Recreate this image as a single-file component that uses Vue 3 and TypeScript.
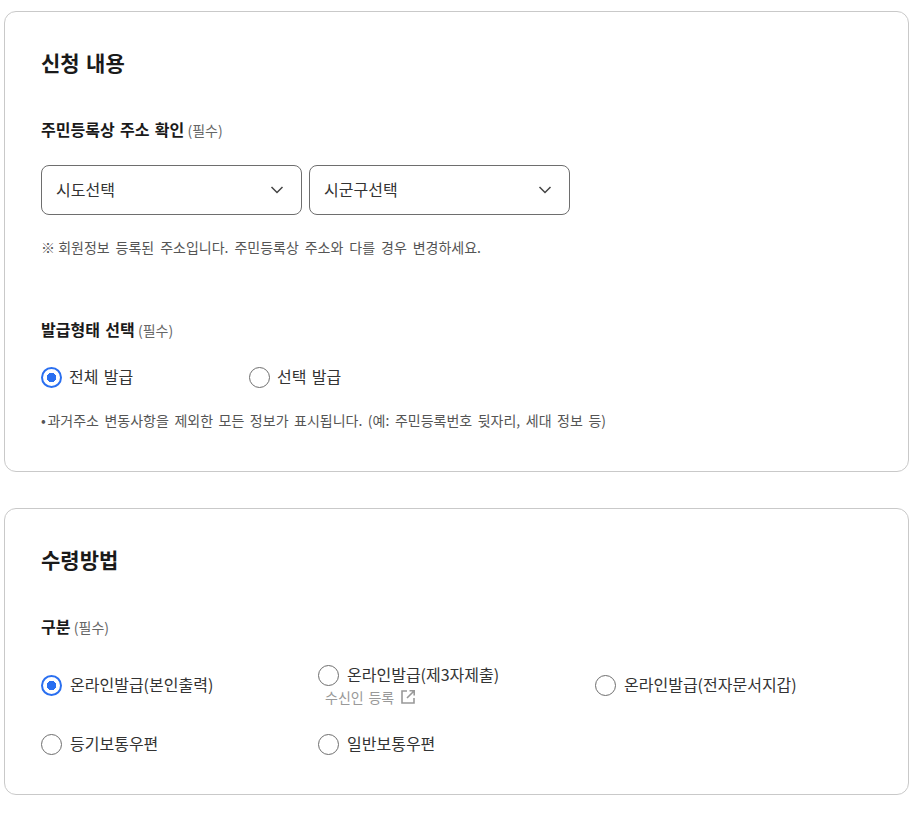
<script setup lang="ts">
import { ref } from 'vue'

const issueType = ref('all')
const receive = ref('self')
</script>

<template>
  <div class="page">
    <section class="card first">
      <h2 class="title">신청 내용</h2>
      <div class="label addr-label">주민등록상 주소 확인 <span class="req">(필수)</span></div>
      <div class="selects">
        <button type="button" class="select">
          <span>시도선택</span>
          <svg width="14" height="8" viewBox="0 0 14 8" fill="none"><path d="M1.5 1l5.5 5.5L12.5 1" stroke="#444" stroke-width="1.5" /></svg>
        </button>
        <button type="button" class="select">
          <span>시군구선택</span>
          <svg width="14" height="8" viewBox="0 0 14 8" fill="none"><path d="M1.5 1l5.5 5.5L12.5 1" stroke="#444" stroke-width="1.5" /></svg>
        </button>
      </div>
      <p class="note addr-note"><span class="mark">※ </span>회원정보 등록된 주소입니다. 주민등록상 주소와 다를 경우 변경하세요.</p>

      <div class="label type-label">발급형태 선택 <span class="req">(필수)</span></div>
      <div class="radios">
        <label class="radio type-radio" @click="issueType = 'all'">
          <i class="dot" :class="{ on: issueType === 'all' }"></i>전체 발급
        </label>
        <label class="radio type-radio" @click="issueType = 'part'">
          <i class="dot" :class="{ on: issueType === 'part' }"></i>선택 발급
        </label>
      </div>
      <p class="note type-note"><span class="mark bullet">• </span>과거주소 변동사항을 제외한 모든 정보가 표시됩니다. (예: 주민등록번호 뒷자리, 세대 정보 등)</p>
    </section>

    <section class="card second">
      <h2 class="title">수령방법</h2>
      <div class="label recv-label">구분 <span class="req">(필수)</span></div>
      <div class="grid">
        <label class="radio" @click="receive = 'self'">
          <i class="dot" :class="{ on: receive === 'self' }"></i>온라인발급(본인출력)
        </label>
        <div class="stack">
          <label class="radio" @click="receive = 'third'">
            <i class="dot" :class="{ on: receive === 'third' }"></i>온라인발급(제3자제출)
          </label>
          <a class="link">
            수신인 등록
            <svg width="16" height="16" viewBox="0 0 16 16" fill="none" stroke="#999" stroke-width="1.6">
              <path d="M7 2H2v12h12V9" />
              <path d="M9.5 1.8h4.7v4.7M14 2L7 9" />
            </svg>
          </a>
        </div>
        <label class="radio" @click="receive = 'wallet'">
          <i class="dot" :class="{ on: receive === 'wallet' }"></i>온라인발급(전자문서지갑)
        </label>
        <label class="radio" @click="receive = 'reg'">
          <i class="dot" :class="{ on: receive === 'reg' }"></i>등기보통우편
        </label>
        <label class="radio" @click="receive = 'normal'">
          <i class="dot" :class="{ on: receive === 'normal' }"></i>일반보통우편
        </label>
      </div>
    </section>
  </div>
</template>

<style>
html,
body {
  background: #fff;
}
</style>

<style scoped>
.page {
  padding: 11px 11px 0 4px;
  font-family: 'Noto Sans CJK KR', 'Noto Sans', sans-serif;
  color: #1a1a1a;
  word-spacing: 1.7px;
  display: flex;
  flex-direction: column;
  gap: 36px;
}
.card {
  border: 1px solid #c9c9c9;
  border-radius: 12px;
  padding: 34px 36px 0;
  box-sizing: border-box;
}
.first {
  height: 461px;
}
.second {
  height: 287px;
}
.title {
  margin: 0;
  font-size: 21px;
  line-height: 32px;
  font-weight: 700;
}
.label {
  font-size: 16px;
  line-height: 24px;
  font-weight: 700;
}
.req {
  font-size: 14px;
  font-weight: 400;
  color: #666;
  margin-left: -2px;
}
.addr-label {
  margin-top: 39px;
}
.selects {
  display: flex;
  gap: 7px;
  margin-top: 23px;
}
.select {
  width: 261px;
  height: 50px;
  border: 1px solid #6e6e6e;
  border-radius: 8px;
  background: #fff;
  padding: 0 17px 2px 14px;
  display: flex;
  align-items: center;
  justify-content: space-between;
  font: inherit;
  font-size: 16px;
  color: #333;
}
.select svg {
  margin-top: 2px;
}
.note {
  margin: 0;
  font-size: 14px;
  line-height: 20px;
  color: #555;
  word-spacing: 2.8px;
}
.mark {
  word-spacing: 0;
}
.addr-note {
  margin-top: 22px;
}
.type-label {
  margin-top: 60px;
}
.radios {
  display: flex;
  margin-top: 22px;
}
.radio {
  display: flex;
  align-items: center;
  gap: 8px;
  font-size: 16px;
  line-height: 24px;
  color: #333;
  cursor: pointer;
}
.type-radio {
  width: 208px;
  gap: 7px;
}
.type-note {
  margin-top: 22px;
  word-spacing: 2.4px;
}
.bullet {
  margin-right: -1.5px;
}
.dot {
  flex: none;
  width: 21px;
  height: 21px;
  margin-top: 2px;
  border: 1px solid #6e6e6e;
  border-radius: 50%;
  box-sizing: border-box;
  background: #fff;
}
.dot.on {
  border: 2px solid #2a6ff0;
  background: radial-gradient(circle, #2a6ff0 0 4.5px, #fff 5px);
}
.recv-label {
  margin-top: 39px;
}
.grid {
  display: grid;
  grid-template-columns: repeat(3, 277px);
  grid-template-rows: 58px 24px;
  row-gap: 18px;
  margin-top: 16px;
  align-items: center;
}
.stack {
  display: flex;
  flex-direction: column;
  gap: 1px;
  margin-top: 1px;
}
.link {
  display: flex;
  align-items: center;
  gap: 6px;
  margin-left: 7px;
  font-size: 14px;
  line-height: 20px;
  color: #999;
}
</style>
